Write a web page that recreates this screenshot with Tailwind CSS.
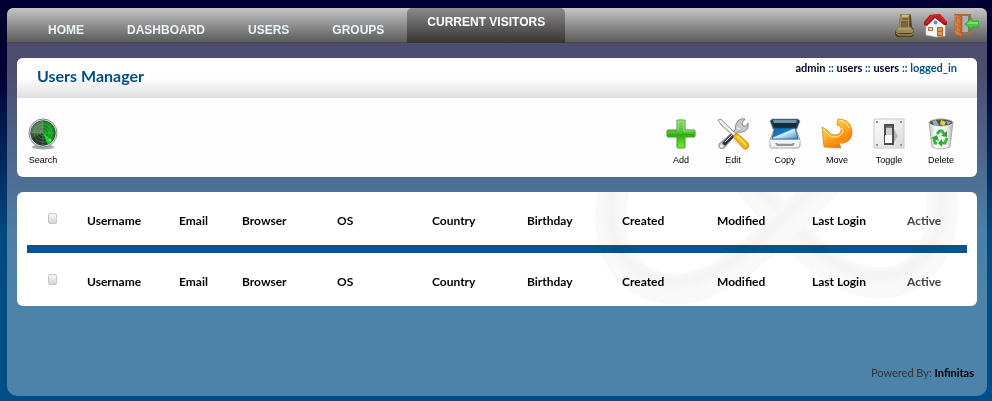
<!DOCTYPE html>
<html lang="en">
<head>
<meta charset="utf-8">
<meta name="viewport" content="width=device-width, initial-scale=1">
<title>Users Manager</title>
<script src="https://cdn.jsdelivr.net/npm/@tailwindcss/browser@4"></script>
</head>
<body class="bg-[#004e85] font-['Lato',sans-serif]">
<div class="flex min-h-screen flex-col bg-[linear-gradient(to_bottom,#000033_0,#000033_70px,#00477c_230px,#004e85_300px)] pt-2 pr-[5px] pb-[5px] pl-[7px]">
<div class="flex flex-1 flex-col rounded-lg rounded-b-[10px] bg-white/30">

<header class="flex h-[35px] items-stretch justify-between rounded-t-md border-b border-[#484848] bg-linear-to-b from-[#c6c6c6] to-[#5c5c5c] pr-2 pl-[21px]">
  <nav aria-label="Main" class="flex gap-[3px] font-['Liberation_Sans',Arial,sans-serif] text-[12px] leading-4 font-bold text-[#eaf3f8]">
    <a href="#" class="px-5 pt-[14px]">HOME</a>
    <a href="#" class="px-5 pt-[14px]">DASHBOARD</a>
    <a href="#" class="px-5 pt-[14px]">USERS</a>
    <a href="#" class="px-5 pt-[14px]">GROUPS</a>
    <a href="#" aria-current="page" class="-mb-px rounded-t-[5px] bg-linear-to-b from-[#8c8c8c] to-[#393434] px-5 pt-[6px] text-white">CURRENT VISITORS</a>
  </nav>
  <div class="flex items-center gap-[6px]">
    <a href="#" aria-label="Archive">
      <svg class="size-[25px]" viewBox="0 0 25 25">
        <path d="M3 18 7 14 8 3Q8 1 10 1H17Q19 1 19 4L20 14 22 17V22L20 24H5L3 22Z" fill="#4e3d1f"/>
        <path d="M8 3 10 1H17L18 3 18 15H7Z" fill="#a38b59"/>
        <path d="M10 5H16V7H10ZM9 8H16V14H9Z" fill="#79633b"/>
        <path d="M10 2H17L16 4H10Z" fill="#ccb77f"/>
        <path d="M3 18 7 14H19L22 18 20 20H6Z" fill="#9c8758"/>
        <path d="M6 16H18M4 20 7 22H19L22 20" fill="none" stroke="#c2ab75"/>
        <path d="M18 3V14" stroke="#554421" stroke-width="1.500"/>
      </svg>
    </a>
    <a href="#" aria-label="Home">
      <svg class="size-[25px]" viewBox="0 0 25 25">
        <path d="M3 11 12 4 22 11V23L14 24 3 22Z" fill="#f3f5f7" stroke="#c5c9d0" stroke-width=".6"/>
        <path d="M1 12V9L7 2 17 1 24 9V12L21 12 12 5 4 13Z" fill="#a8141b"/>
        <path d="M7 2 17 1 24 9 20 10 12 4 4 11 1 10Z" fill="#cf242a"/>
        <path d="M7 3 1 11M12 3 4 12M13 3 22 11" stroke="#8f1118" stroke-width=".8"/>
        <circle cx="12.5" cy="9.500" r="2" fill="#3d9de0"/>
        <path d="M14 14H20V23.500H14Z" fill="#b76524"/><path d="M15 15H19V18H15ZM15 19H19V22H15Z" fill="#de9656"/>
        <path d="M5 14H10V18H5Z" fill="#a97b52"/><path d="M6 15H9V17H6Z" fill="#e8c995"/>
      </svg>
    </a>
    <a href="#" aria-label="Log out">
      <svg class="size-[25px]" viewBox="0 0 25 25">
        <defs><linearGradient id="door" x2="1"><stop stop-color="#e58b45"/><stop offset="1" stop-color="#c4692d"/></linearGradient></defs>
        <path d="M1 1H17V21L14 22H8V24L1 22Z" fill="#b96831"/>
        <path d="M4 2H15V20L8 22Z" fill="#737b80"/><path d="M8 3H14V19H8Z" fill="#aab0b1"/>
        <path d="M1 1 8 4V24L1 21Z" fill="url(#door)" stroke="#a35421" stroke-width=".6"/>
        <path d="M2.500 4 6.500 6V12L2.500 10ZM2.500 13 6.500 15V20L2.500 18Z" fill="none" stroke="#b3642e" stroke-width=".7"/>
        <path d="M11 11 18 5V8H25V14H18V17Z" fill="#47c83f" stroke="#259c26" stroke-width=".6"/>
        <path d="M13 10.500 17.500 7V9H24V11H13Z" fill="#7ddf6c"/>
      </svg>
    </a>
  </div>
</header>

<main class="flex flex-col gap-[15px] px-[10px] pt-[15px]">
  <section class="overflow-hidden rounded-md bg-[#fdfdfd]">
    <div class="flex h-10 items-start justify-between bg-[linear-gradient(to_bottom,#fff_50%,#dedede)] px-5">
      <h1 class="pt-2 text-[16px] leading-5 font-bold text-[#004e85]">Users Manager</h1>
      <p class="pt-1 text-[11px] leading-3 font-bold text-[#004e85]"><a href="#" class="text-[#000033]">admin</a> :: <a href="#" class="text-[#000033]">users</a> :: <a href="#" class="text-[#000033]">users</a> :: logged_in</p>
    </div>
    <div class="flex justify-between pt-5 pr-[10px] pb-[11px] font-['Liberation_Sans',Arial,sans-serif] text-[9px] leading-3 text-black">
      <button type="button" class="flex w-[52px] flex-col items-center gap-1">
        <svg class="size-8" viewBox="0 0 32 32">
          <defs><linearGradient id="radar" x2="1"><stop stop-color="#3a523d"/><stop offset=".5" stop-color="#157a1c"/><stop offset=".8" stop-color="#10a818"/><stop offset="1" stop-color="#0b7a12"/></linearGradient></defs>
          <ellipse cx="16" cy="29" rx="11" ry="2.500" fill="#aaa"/>
          <circle cx="16" cy="15" r="14" fill="#f1f1f1" stroke="#666" stroke-width=".8"/>
          <circle cx="16" cy="15" r="12.300" fill="url(#radar)" stroke="#303a32" stroke-width=".8"/>
          <path d="M16 15 20 26A12 12 0 0 1 5 20Z" fill="#263a2a"/>
          <path d="M16 15 21 26 25 23Z" fill="#16df26"/>
          <path d="M16 15 4 15A12 12 0 0 1 16 3Z" fill="#6e8a70" opacity=".7"/>
          <g fill="none" stroke="#a4caa5" stroke-width=".4" opacity=".7"><circle cx="16" cy="15" r="3"/><circle cx="16" cy="15" r="6"/><circle cx="16" cy="15" r="9"/><path d="M16 3V27M4 15H28"/></g>
          <circle cx="23" cy="22" r="1" fill="#9bff97"/>
        </svg>Search</button>
      <div class="flex">
        <button type="button" class="flex w-[52px] flex-col items-center gap-1">
          <svg class="size-8" viewBox="0 0 32 32">
            <defs><linearGradient id="plus" x2="0" y2="1"><stop stop-color="#8cd96d"/><stop offset=".48" stop-color="#4ebd2c"/><stop offset=".5" stop-color="#2ea80d"/><stop offset="1" stop-color="#74ed2f"/></linearGradient></defs>
            <path d="M13 2H19Q20 2 20 3V12H29Q30 12 30 13V18Q30 19 29 19H20V29Q20 30 19 30H13Q12 30 12 29V19H3Q2 19 2 18V13Q2 12 3 12H12V3Q12 2 13 2Z" fill="url(#plus)" stroke="#3e9b28"/>
            <path d="M13 12.500V3H19V13H29" fill="none" stroke="#b4eb9d" stroke-width=".7"/>
          </svg>Add</button>
        <button type="button" class="flex w-[52px] flex-col items-center gap-1">
          <svg class="size-8" viewBox="0 0 32 32">
            <path d="M2 26 18 12Q18 5 22 2 25 0 28 1L25 5 26 8 29 8 31 5Q32 11 28 13 25 15 21 14L7 30Q1 32 2 26Z" fill="#c6c8ca" stroke="#72777b" stroke-width=".8"/>
            <path d="M5 25 15 15 18 18 8 28Z" fill="#303437"/><path d="M8 24 15 17M20 10 23 11" stroke="#fff"/><circle cx="4.500" cy="28" r="1.200" fill="#fff"/>
            <path d="M1 2 4 1 8 5 20 17 18 19 5 8Z" fill="#dcdedf" stroke="#777" stroke-width=".7"/>
            <path d="M3 3 18 17" stroke="#fff" stroke-width="1.500"/>
            <path d="M16 19 20 15 31 25Q33 29 30 31 27 32 25 29Z" fill="#f6b516" stroke="#b87305" stroke-width=".7"/>
            <path d="M20 18 29 27" stroke="#ffe36c" stroke-width="1.500"/>
          </svg>Edit</button>
        <button type="button" class="flex w-[52px] flex-col items-center gap-1">
          <svg class="size-8" viewBox="0 0 32 32">
            <defs><linearGradient id="glass" x2="1" y2="1"><stop stop-color="#0869b4"/><stop offset=".42" stop-color="#1878c4"/><stop offset=".48" stop-color="#d7efff"/><stop offset="1" stop-color="#3389cb"/></linearGradient></defs>
            <path d="M3 1H29L31 3 28 11H4L1 3Z" fill="#263c4d" stroke="#8d9aa3" stroke-width=".7"/>
            <path d="M4 2H28L27 5H5Z" fill="#6d95b0"/><path d="M4 5H28L26 10H6Z" fill="#152a3a"/>
            <path d="M5 11H27L31 22V29H1V22Z" fill="#cbd0d5" stroke="#858c93" stroke-width=".7"/>
            <path d="M6 10H26L29 21H3Z" fill="url(#glass)" stroke="#124b7c" stroke-width=".7"/>
            <path d="M1 22H31L30 29Q16 31 2 29Z" fill="#f1f2f4"/>
            <path d="M6 25H26L24 28H8Z" fill="#8c949a"/><path d="M8 25H24L23 26H9Z" fill="#d7dce0"/>
            <path d="M2 30H30" stroke="#aaa"/>
          </svg>Copy</button>
        <button type="button" class="flex w-[52px] flex-col items-center gap-1">
          <svg class="size-8" viewBox="0 0 32 32">
            <defs><linearGradient id="turn" x2=".6" y2="1"><stop stop-color="#ffe15b"/><stop offset=".5" stop-color="#ffb52d"/><stop offset="1" stop-color="#ef7100"/></linearGradient></defs>
            <path d="M17 1Q27 1 30 9 33 18 27 23 23 26 18 25L20 30 3 29 1 9 7 13Q10 18 15 17 20 16 20 12 21 8 16 7Z" fill="url(#turn)" stroke="#d78610" stroke-width=".8"/>
            <path d="M18 2Q26 3 28 10M2 11 7 16Q12 21 18 18 23 15 21 10" fill="none" stroke="#fff3a0"/>
            <path d="M4 27 7 22 12 24Q22 27 28 18" fill="none" stroke="#ff9518" stroke-width="1.500"/>
          </svg>Move</button>
        <button type="button" class="flex w-[52px] flex-col items-center gap-1">
          <svg class="size-8" viewBox="0 0 32 32">
            <defs><linearGradient id="plate" x2="1" y2="1"><stop stop-color="#fdfdfd"/><stop offset="1" stop-color="#dadada"/></linearGradient></defs>
            <path d="M1 1H31V30H1Z" fill="url(#plate)" stroke="#cacaca"/>
            <path d="M20 9 25 18 20 26Z" fill="#b5b5b5"/>
            <path d="M11 6H21V27H11Z" fill="#4c4c4c"/><path d="M13 8H19V17H13Z" fill="#cfcfcf"/><path d="M12 17H19V25H12Z" fill="#fff"/>
            <path d="M13 8H19V10H13Z" fill="#777"/>
            <g fill="#777"><circle cx="4" cy="4" r="1"/><circle cx="28" cy="4" r="1"/><circle cx="4" cy="27" r="1"/><circle cx="28" cy="27" r="1"/></g>
          </svg>Toggle</button>
        <button type="button" class="flex w-[52px] flex-col items-center gap-1">
          <svg class="size-8" viewBox="0 0 32 32">
            <defs><linearGradient id="bin" x2="1"><stop stop-color="#c7cbcb"/><stop offset=".3" stop-color="#fff"/><stop offset=".75" stop-color="#eee"/><stop offset="1" stop-color="#aaadad"/></linearGradient></defs>
            <path d="M4 4 7 29Q16 33 25 29L28 4Z" fill="url(#bin)" stroke="#999" stroke-width=".7"/>
            <ellipse cx="16" cy="4.500" rx="12" ry="3.700" fill="#4c5152" stroke="#c9cccc"/>
            <path d="M7 3 11 2 14 7 9 7Z" fill="#9ba7b3"/><path d="M16 2 21 4 19 8 15 6Z" fill="#e3ce31"/><path d="M21 3 26 4 23 7Z" fill="#96aab5"/>
            <path d="M12 16 14.500 13H17L19 16M22 20 20 25H17M12 25H10L9 21" fill="none" stroke="#37b83d" stroke-width="3"/>
            <path d="M22 13V19L16 18ZM17 21V29L13 25ZM6 20 12 17 14 23Z" fill="#2ba534"/>
          </svg>Delete</button>
      </div>
    </div>
  </section>

  <section class="relative overflow-hidden rounded-md bg-white px-[10px]">
    <table class="w-full table-fixed border-collapse text-left text-[12px] leading-4 text-black">
      <colgroup>
        <col class="w-[50px]"><col class="w-[92px]"><col class="w-[63px]"><col class="w-[95px]"><col class="w-[95px]"><col class="w-[95px]"><col class="w-[95px]"><col class="w-[95px]"><col class="w-[95px]"><col class="w-[95px]"><col>
      </colgroup>
      <thead class="[&_th]:pt-1 [&_th]:pl-[10px]">
        <tr class="h-[53px]">
          <th scope="col"><input type="checkbox" aria-label="Select all" class="mb-1 ml-[11px] block h-[11px] w-[9px] appearance-none rounded-[2px] border border-[#c6c6c6] bg-linear-to-b from-[#f8f8f8] to-[#d4d4d4]"></th>
          <th scope="col">Username</th><th scope="col">Email</th><th scope="col">Browser</th><th scope="col">OS</th><th scope="col">Country</th><th scope="col">Birthday</th><th scope="col">Created</th><th scope="col">Modified</th><th scope="col">Last Login</th><th scope="col" class="text-[#444]">Active</th>
        </tr>
      </thead>
      <tbody><tr class="h-2 bg-[#0b5388]"><td colspan="11" class="p-0"></td></tr></tbody>
      <tfoot class="[&_th]:pt-1 [&_th]:pl-[10px]">
        <tr class="h-[53px]">
          <th><input type="checkbox" aria-label="Select all rows" class="mb-1 ml-[11px] block h-[11px] w-[9px] appearance-none rounded-[2px] border border-[#c6c6c6] bg-linear-to-b from-[#f8f8f8] to-[#d4d4d4]"></th>
          <th>Username</th><th>Email</th><th>Browser</th><th>OS</th><th>Country</th><th>Birthday</th><th>Created</th><th>Modified</th><th>Last Login</th><th class="text-[#444]">Active</th>
        </tr>
      </tfoot>
    </table>
    <!-- infinity watermark -->
    <svg class="pointer-events-none absolute top-0 right-0 h-[114px] w-[400px] mix-blend-multiply" viewBox="0 0 400 114" fill="none" aria-hidden="true">
      <defs>
        <filter id="soft" x="-5%" y="-10%" width="110%" height="120%"><feGaussianBlur stdDeviation="3"/></filter>
        <path id="right-loop" d="M160 -20C200 14 240 91 303 91 350 91 378 40 360 -20"/>
        <path id="left-loop" d="M42 -20C20 40 42 97 98 97 150 97 190 46 262 -20"/>
      </defs>
      <g stroke-width="31"><use href="#right-loop" stroke="#f9f9f9"/></g>
      <g filter="url(#soft)" stroke="#f3f3f3" stroke-width="9"><use href="#right-loop" y="-7"/></g>
      <use href="#left-loop" stroke="#f9f9f9" stroke-width="31"/>
      <g filter="url(#soft)" stroke="#f3f3f3" stroke-width="9"><use href="#left-loop" y="-7"/></g>
    </svg>
  </section>
</main>

<footer class="mt-auto pr-[13px] pb-[15px] text-right text-[11px] leading-4 text-[#333]">Powered By: <a href="#" class="font-bold text-black">Infinitas</a></footer>
</div>
</div>
</body>
</html>
